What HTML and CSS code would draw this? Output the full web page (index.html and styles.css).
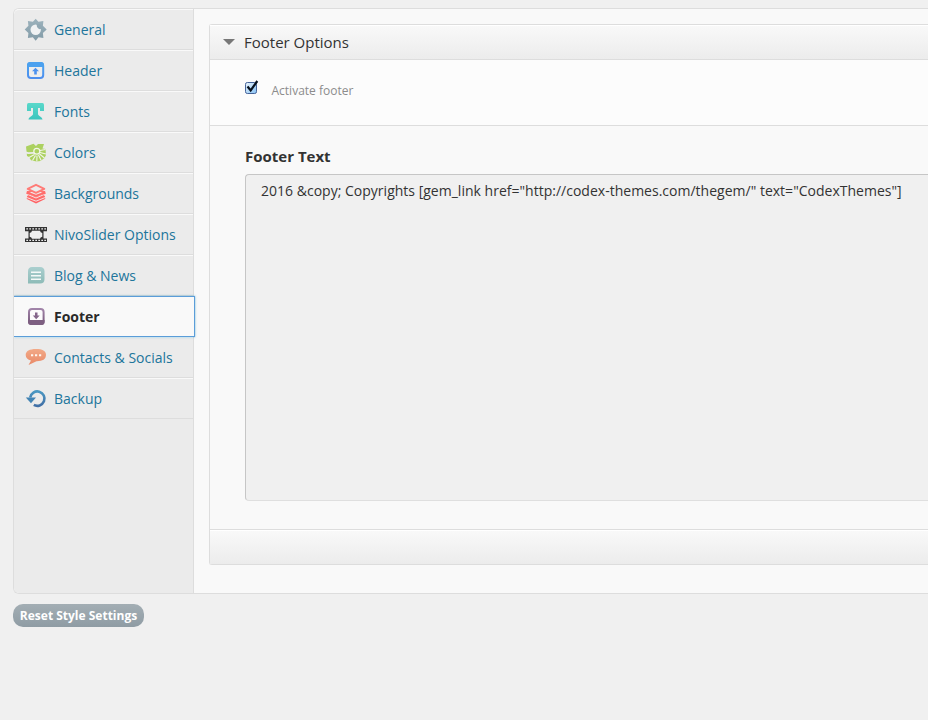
FILE: index.html
```html
<!DOCTYPE html>
<html lang="en">
<head>
<meta charset="utf-8">
<title>Theme Options</title>
<link rel="stylesheet" href="styles.css">
</head>
<body>
<svg class="defs" width="0" height="0" aria-hidden="true">
  <defs>
    <linearGradient id="gray" x2="0" y2="1"><stop stop-color="#9db3bd"/><stop offset="1" stop-color="#829ba7"/></linearGradient>
    <linearGradient id="blue" x2="0" y2="1"><stop stop-color="#4aa5f0"/><stop offset="1" stop-color="#4c8eee"/></linearGradient>
    <linearGradient id="teal" x2="0" y2="1"><stop stop-color="#5ad8ca"/><stop offset="1" stop-color="#3cc5be"/></linearGradient>
    <linearGradient id="mint" x2="0" y2="1"><stop stop-color="#aacfcf"/><stop offset="1" stop-color="#8dbbb7"/></linearGradient>
    <linearGradient id="purple" x2="0" y2="1"><stop stop-color="#a184a9"/><stop offset="1" stop-color="#765779"/></linearGradient>
    <linearGradient id="orange" x2="0" y2="1"><stop stop-color="#f2a987"/><stop offset="1" stop-color="#e98968"/></linearGradient>
    <linearGradient id="navy" x2="0" y2="1"><stop stop-color="#4a97c2"/><stop offset="1" stop-color="#416fa6"/></linearGradient>
  </defs>
</svg>
<main class="panel">
  <nav class="tabs">
    <a class="tab"><svg viewBox="0 0 24 24"><path fill="url(#gray)" d="M11.700.7l2.700 3.100 5-.8-.5 4.700 3.800 3.800-3.800 3.500.5 5-4.900-.7-2.800 3.500-2.900-3.500-4.900.7.500-5L.7 11.500l3.700-3.800L3.900 3l5 .8z"/><circle cx="11.700" cy="11.800" r="5.200" fill="#f0f2f3"/><path fill="#91a8b3" d="M12.500 6h3l2 2.500v2q-1.500 1.300-3.200 0t-1.800-4.500z"/></svg>General</a>
    <a class="tab"><svg viewBox="0 0 24 24"><rect x="4" y="4" width="15.200" height="15" rx="3" fill="#ededed" stroke="url(#blue)" stroke-width="2"/><path fill="#4ca1ef" d="M3 8V6q0-3 3-3h11q3 0 3 3v2z"/><path fill="#4c91ee" d="M11.500 8.800l3.500 3.500h-2.200v3.200h-2.600v-3.200H8z"/></svg>Header</a>
    <a class="tab"><svg viewBox="0 0 24 24"><path fill="url(#teal)" d="M4.500 3h14q1.500 0 1.500 2v6h-4V8h-2v6c0 2 4.500 3 4.500 5.500h-14C4.500 17 9 16 9 14V8H7v3H3V5q0-2 1.500-2z"/></svg>Fonts</a>
    <a class="tab"><svg viewBox="0 0 24 24"><path fill="#acd160" d="M2 5.500l7.500-2.700L12 5l2-2h6l-1.500 4.500L21.500 8l.5 6-1.500 3-4 3-4 .5-5.500-1.200L5 16l-2-1z"/><path fill="none" stroke="#f2f5ea" stroke-width="1.100" d="M10.500 13.500l-5.500 3M11.500 14.500l-3 5M13 14.500l-.2 6M14.500 14l2.700 5.500M15.500 13l5 4M16 11.500l6 1.500M16 9.500l5.500-1"/><path fill="none" stroke="#ebebeb" stroke-width="1.800" d="M1.500 11.500l3 .7L10 11.800"/><ellipse cx="12.800" cy="10.200" rx="3" ry="2.900" fill="#acd160" stroke="#f4f6ec" stroke-width="1.200"/></svg>Colors</a>
    <a class="tab"><svg viewBox="0 0 24 24"><path fill="#ff6264" d="M2.800 14l9.200 2 9.200-2v3L12 21.500 2.800 17z"/><path fill="#ff6c6b" stroke="#f5eeee" stroke-width=".9" d="M2 11.300L12 12l10-.7-1.500 2 1.500 1.900-10 4-10-4 1.500-1.900z"/><path fill="#ff7572" stroke="#f5eeee" stroke-width=".9" d="M2.300 8.500h19.400v3.300L12 16l-9.700-4.200z"/><path fill="#f0eeee" d="M4 11.500L12 8l8 3.500-8 3.300z"/><path fill="#ff6c6b" d="M3 9.500l9 3.300 9-3.300.8 2.300-5.300 1.300-4.500 2-4.500-2-5.300-1.300z"/><path fill="#ededed" stroke="#ff7b77" stroke-width="1.900" stroke-linejoin="round" d="M12 2.800l8.300 4-8.300 4-8.300-4z"/></svg>Backgrounds</a>
    <a class="tab"><svg viewBox="0 0 24 24"><path fill="#333" d="M1 4h22v4.200h-3.500v7.300H23V19H1v-3.500h3.500V8.200H1z"/><path stroke="#eee" stroke-width="1.300" stroke-dasharray="1.700 1.300" d="M2.300 5.900h20M2.300 17.300h20"/><path fill="#eee" d="M8 7.700h8q.2 2 2.300 2.300v3.700Q16.200 14 16 15.800H8Q7.800 14 5.700 13.700V10Q7.800 9.700 8 7.700z"/></svg>NivoSlider Options</a>
    <a class="tab"><svg viewBox="0 0 24 24"><path fill="url(#mint)" d="M8 3h8q4.500 0 4.500 4.500V15q0 4.500-4.500 4.500H4V7.500Q4 3 8 3z"/><path stroke="#f4f9f8" stroke-width="1.500" d="M7 8.200h10M7 11.700h10M7 15.200h10"/></svg>Blog &amp; News</a>
    <a class="tab active"><svg viewBox="0 0 24 24"><rect x="5" y="4" width="14.600" height="15" rx="3" fill="#fcfbfc" stroke="url(#purple)" stroke-width="2"/><path fill="#7d5f81" d="M4 15h16.600v2q0 3-3 3H7q-3 0-3-3z"/><path fill="#84658a" d="M11 7.500h2.500v3h2.200l-3.500 3.700-3.400-3.700H11z"/></svg>Footer</a>
    <a class="tab"><svg viewBox="0 0 24 24"><path fill="url(#orange)" d="M12 3c6.500 0 10 1.800 10 5.800 0 4.700-3.600 6.500-9.500 6.400L4.500 19l2.500-4.500C3.700 13.500 1.700 12 1.700 9c0-4 3.800-6 10.300-6z"/><path fill="#fff6f0" d="M7 8.200h2.200v2H7zM11 8.200h2.200v2H11zM15 8.200h2.200v2H15z"/></svg>Contacts &amp; Socials</a>
    <a class="tab"><svg viewBox="0 0 24 24"><path fill="none" stroke="url(#navy)" stroke-width="2.600" d="M6.200 10.500a7.200 7.200 0 1 1 3.600 7.400"/><path fill="#4384b4" d="M1.800 10.500H12L7 16.300z"/></svg>Backup</a>
  </nav>
  <div class="content">
    <section class="box">
      <h2 class="box-head"><span class="arrow"></span>Footer Options</h2>
      <div class="option">
        <svg class="check" viewBox="0 0 14 15"><defs><linearGradient id="cb" x2="1" y2="1"><stop stop-color="#edf5fb"/><stop offset="1" stop-color="#84c0f4"/></linearGradient></defs><rect x=".5" y="2.500" width="11" height="11" rx="1.800" fill="url(#cb)" stroke="#46649a"/><path fill="none" stroke="#07101d" stroke-width="2.200" d="M2.500 6.500l3.200 4L12.300 1"/></svg>
        <span>Activate footer</span>
      </div>
      <div class="field">
        <h3>Footer Text</h3>
        <div class="textarea">2016 &amp;copy; Copyrights [gem_link href="http://codex-themes.com/thegem/" text="CodexThemes"]</div>
      </div>
      <div class="box-foot"></div>
    </section>
  </div>
</main>
<button class="reset">Reset Style Settings</button>
</body>
</html>
```

FILE: styles.css
```css
* { box-sizing: border-box; }
body {
  margin: 0;
  padding: 8px 0 0 13px;
  height: 720px;
  overflow: hidden;
  background: #f0f0f0;
  color: #333;
  font: 14px/20px "Open Sans", sans-serif;
}
.defs { display: block; }
.panel {
  display: flex;
  height: 586px;
  border: 1px solid #ddd;
  border-right: 0;
  border-radius: 6px 0 0 6px;
  background: #f9f9f9;
}
.tabs {
  flex: 0 0 180px;
  min-width: 0;
  border-right: 1px solid #ddd;
  border-radius: 5px 0 0 5px;
  background: #ebebeb;
}
.tab {
  display: flex;
  align-items: center;
  gap: 6px;
  height: 41px;
  padding-left: 10px;
  border-top: 1px solid #f9f9f9;
  border-bottom: 1px solid #ddd;
  color: #21759b;
  white-space: nowrap;
}
.tab:first-child { border-top-left-radius: 5px; }
.tab svg { width: 24px; height: 24px; flex: none; }
.tab.active {
  width: 181px;
  border: 1px solid #5b9dd9;
  border-left: 0;
  background: #f9f9f9;
  box-shadow: 0 0 2px rgba(30, 140, 190, .6);
  clip-path: inset(-3px -3px -3px 0);
  color: #2a2a2a;
  font-weight: 700;
}
.content { flex: 1; min-width: 0; padding: 15px 0 0 15px; }
.box {
  display: flex;
  flex-direction: column;
  height: 541px;
  border: 1px solid #ddd;
  border-right: 0;
  border-radius: 3px 0 0 3px;
}
.box-head {
  display: flex;
  align-items: center;
  gap: 9px;
  height: 35px;
  margin: 0;
  padding-left: 13px;
  border-bottom: 1px solid #ddd;
  background: linear-gradient(#f9f9f9, #ececec);
  box-shadow: inset 0 1px #fff;
  font-size: 15px;
  font-weight: 400;
}
.arrow {
  border: 6px solid transparent;
  border-top: 6px solid #777;
  border-bottom: 0;
}
.option {
  display: flex;
  gap: 12.500px;
  height: 66px;
  padding: 20px 0 0 35px;
  border-bottom: 1px solid #ddd;
  background: #fcfcfc;
  color: #8c8c8c;
  font-size: 12px;
}
.option span { padding-top: 1px; }
.check { width: 14px; height: 15px; }
.field { flex: 1; padding: 20px 0 0 35px; }
.field h3 { margin: 0 0 8px; font-size: 15px; line-height: 20px; }
.textarea {
  height: 327px;
  padding: 6px 15px;
  border: 1px solid #dfdfdf;
  border-top-color: #c6c6c6;
  border-left-color: #c6c6c6;
  border-right: 0;
  border-radius: 4px 0 0 4px;
  background: #f0f0f0;
  letter-spacing: .01px;
  white-space: nowrap;
}
.box-foot {
  height: 35px;
  border-top: 1px solid #ddd;
  background: linear-gradient(#f9f9f9, #ececec);
  box-shadow: inset 0 1px #fff;
}
.reset {
  display: block;
  width: 131px;
  height: 23px;
  margin-top: 10px;
  padding: 0;
  border: 0;
  border-radius: 10px;
  background: linear-gradient(#a3aeb4, #8f9ca4);
  color: #fff;
  font: 700 12px/22px "Open Sans", sans-serif;
}
```
